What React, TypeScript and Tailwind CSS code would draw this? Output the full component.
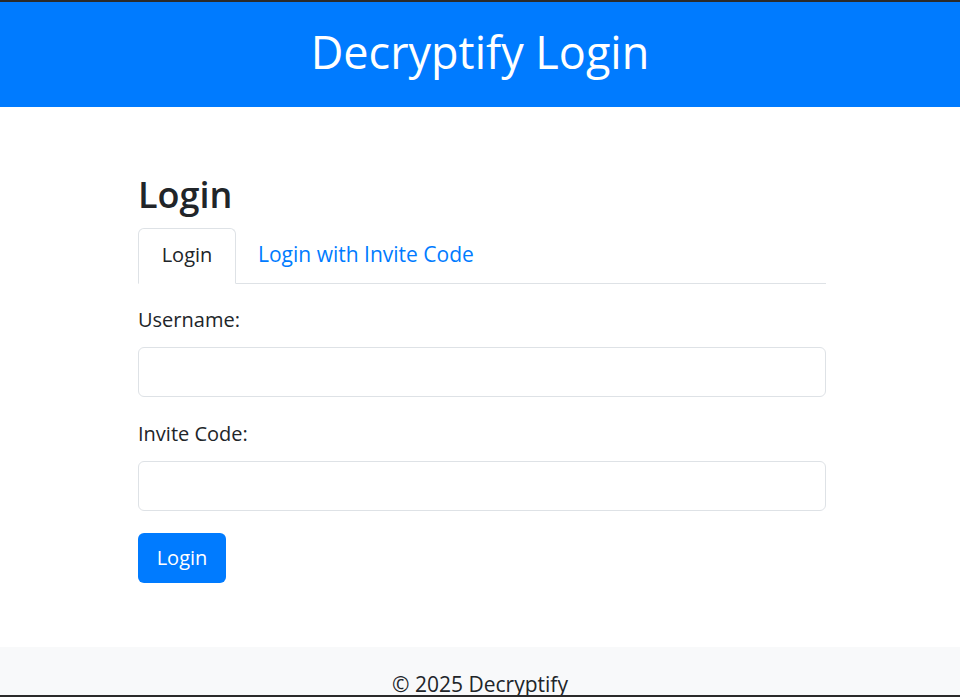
export default function App() {
  const font = { fontFamily: '"Open Sans", "Noto Sans", sans-serif' };
  return (
    <div className="flex h-[697px] flex-col overflow-hidden border-t-2 border-b-2 border-[#2a2a2a] bg-white text-[#212529]" style={font}>
      <header className="flex h-[105px] shrink-0 items-center justify-center bg-[#007bff] pb-[7px]">
        <h1 className="text-[45px] font-medium leading-none text-white">Decryptify Login</h1>
      </header>
      <main className="mx-auto w-[692px] shrink-0 pl-[4px]">
        <h2 className="mt-[68px] text-[36px] font-semibold leading-[40px]">Login</h2>
        <div className="mt-[13px] flex border-b border-[#dee2e6]">
          <div className="-mb-px flex h-[56px] w-[98px] items-center justify-center rounded-t-[6px] border border-b-white border-[#dee2e6] bg-white pb-[3px] text-[20px]">
            Login
          </div>
          <div className="flex h-[55px] items-center px-[22px] pb-[1px] text-[21px] text-[#007bff]">Login with Invite Code</div>
        </div>
        <label className="mt-[24px] block text-[20px] leading-[24px]">Username:</label>
        <div className="mt-[15px] h-[50px] rounded-[6px] border border-[#dee2e6]" />
        <label className="mt-[25px] block text-[20px] leading-[24px]">Invite Code:</label>
        <div className="mt-[15px] h-[50px] rounded-[6px] border border-[#dee2e6]" />
        <button className="mt-[22px] flex h-[50px] w-[88px] items-center justify-center rounded-[6px] bg-[#007bff] text-[20px] text-white">
          Login
        </button>
      </main>
      <footer className="mt-[64px] flex h-[60px] shrink-0 justify-center bg-[#f8f9fa] pt-[23px] text-[21px] leading-[28px]">
        © 2025 Decryptify
      </footer>
    </div>
  );
}
